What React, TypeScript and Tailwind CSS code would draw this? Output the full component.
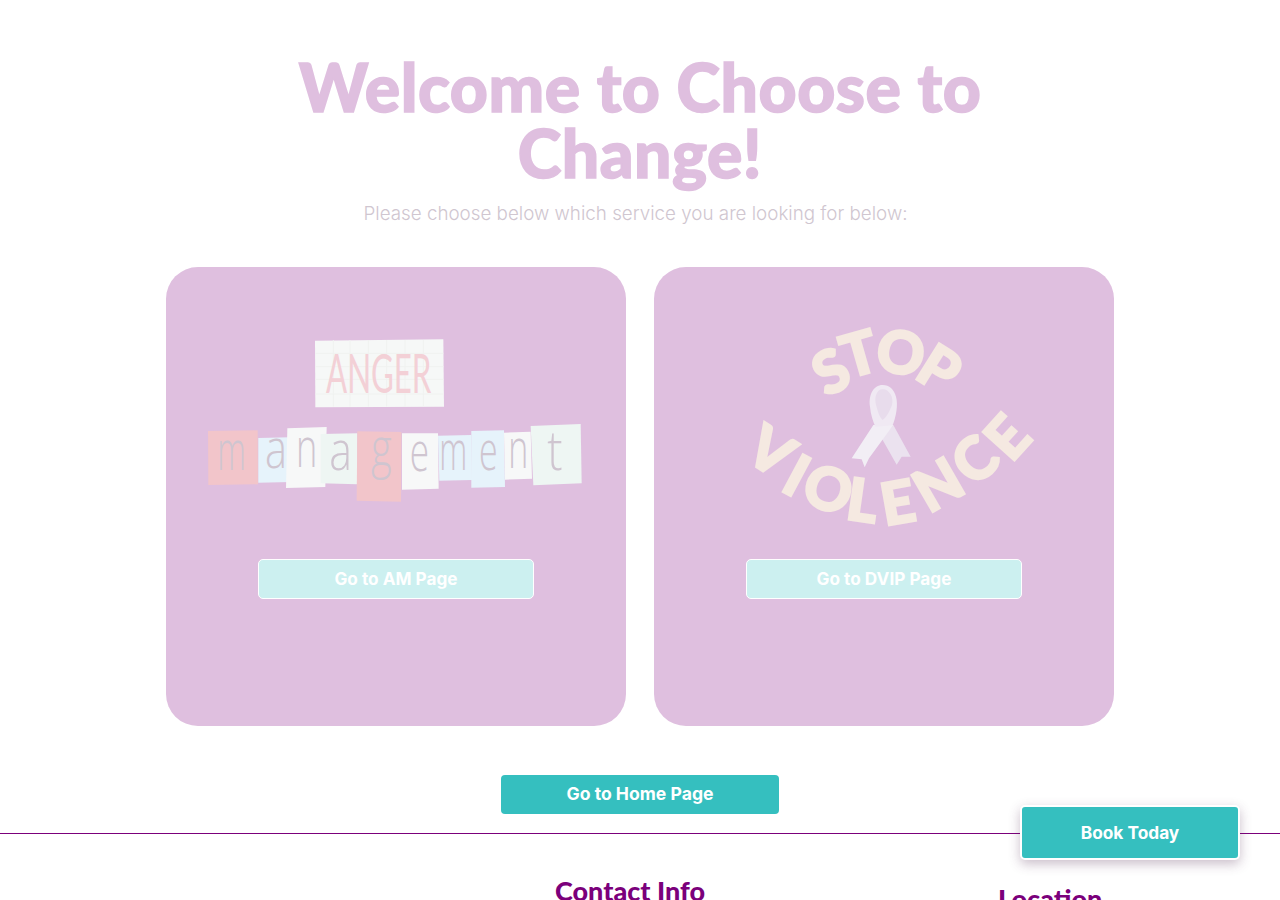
const tiles: [string, string, string, number, number, number][] = [
  ["54,333 203,331 204,493 55,495", "#f2c5ca", "m", 125, 450, 86],
  ["205,354 300,352 303,486 205,488", "#e6f3fb", "a", 258, 445, 66],
  ["292,325 410,321 406,501 288,504", "#f7f8f8", "n", 350, 440, 64],
  ["392,342 502,340 502,493 392,490", "#eef6f3", "a", 452, 450, 68],
  ["502,334 634,336 633,545 500,542", "#f2c5ca", "g", 574, 442, 62],
  ["636,340 744,340 746,506 636,509", "#f7f8f8", "e", 688, 452, 58],
  ["744,347 844,345 846,480 748,482", "#e6f3fb", "m", 790, 450, 84],
  ["844,333 942,331 945,501 844,503", "#e6f3fb", "e", 895, 450, 56],
  ["942,338 1022,335 1026,476 945,479", "#f7f8f8", "n", 985, 445, 60],
  ["1022,318 1172,312 1175,490 1030,496", "#eef6f3", "t", 1095, 450, 46],
];

const stopLetters: [string, number, number, number][] = [
  ["S", 303, 185, -28],
  ["T", 388, 132, -16],
  ["O", 512, 128, 10],
  ["P", 628, 178, 32],
  ["V", 122, 425, 32],
  ["I", 200, 497, 28],
  ["O", 295, 538, 18],
  ["L", 398, 572, 8],
  ["E", 503, 578, -10],
  ["N", 625, 525, -30],
  ["C", 735, 450, -42],
  ["E", 832, 382, -48],
];

function AngerLogo() {
  return (
    <svg viewBox="0 0 1230 600" className="w-[410px] h-[200px] block">
      <polygon points="375,62 760,58 762,260 376,262" fill="#f6f8f7" />
      <g stroke="#f0f2f0" strokeWidth="3">
        {[430, 480, 535, 590, 645, 700].map((x) => (
          <line key={x} x1={x} y1="60" x2={x} y2="260" />
        ))}
        {[100, 140, 178, 222].map((y) => (
          <line key={y} x1="376" y1={y} x2="760" y2={y} />
        ))}
      </g>
      <text x="408" y="218" textLength="316" lengthAdjust="spacingAndGlyphs" fontFamily="Lato, sans-serif" fontWeight="400" fontSize="164" fill="#f3d0d6">
        ANGER
      </text>
      {tiles.map(([pts, fill]) => (
        <polygon key={pts} points={pts} fill={fill} />
      ))}
      {tiles.map(([pts, , ch, x, y, w]) => (
        <text key={pts} x={x - w / 2} y={y} textLength={w} lengthAdjust="spacingAndGlyphs" fontFamily="'Open Sans', sans-serif" fontWeight="300" fontSize="165" fill="#cfc5d0">
          {ch}
        </text>
      ))}
    </svg>
  );
}

function StopLogo() {
  return (
    <svg viewBox="0 0 960 690" className="w-[320px] h-[230px] block">
      {stopLetters.map(([ch, x, y, r], i) => (
        <text
          key={i}
          x={x}
          y={y + 62}
          textAnchor="middle"
          transform={`rotate(${r} ${x} ${y})`}
          fontFamily="Lato, sans-serif"
          fontWeight="900"
          fontSize="176"
          fill="#f5e9e1"
          stroke="#f5e9e1"
          strokeWidth="7"
        >
          {ch}
        </text>
      ))}
      <path d="M455 385 L490 345 L542 440 L515 440 L500 464 Z" fill="#ebe2ef" />
      <path d="M430 345 L490 345 L417 445 L404 472 L395 448 L365 445 Z" fill="#f2eef5" />
      <path
        d="M458 225 C430 225 415 255 420 290 C422 315 430 335 436 350 L488 346 C498 320 505 285 498 260 C492 238 478 225 458 225 Z"
        fill="#f0e9f3"
      />
      <path d="M458 238 C440 238 432 262 438 285 C444 305 448 322 458 330 C470 322 478 305 486 285 C492 262 478 238 458 238 Z" fill="#e8dcec" />
    </svg>
  );
}

function Card({ label, children }: { label: string; children: React.ReactNode }) {
  return (
    <div className="w-[460px] h-[459px] shrink-0 rounded-[32px] bg-[#dfbfdf] flex flex-col items-center">
      <div className="h-[292px] w-full flex justify-center">{children}</div>
      <button className="w-[276px] h-[40px] shrink-0 rounded-[5px] border border-white bg-[#ccf0f0] text-white font-bold text-[17.2px] font-['Inter',sans-serif]">
        {label}
      </button>
    </div>
  );
}

export default function App() {
  return (
    <div className="relative h-[900px] overflow-hidden bg-white flex flex-col items-center pt-[54px] font-['Inter',sans-serif]">
      <h1 className="w-[760px] shrink-0 text-center text-[66px] leading-[66px] font-black text-[#dfbfdf] font-['Lato',sans-serif] tracking-[0.5px] [-webkit-text-stroke:1.5px_#dfbfdf]">
        Welcome to Choose to Change!
      </h1>
      <p className="mt-[13px] mr-[9px] h-[30px] shrink-0 leading-[30px] text-[18.8px] font-light text-[#d0c6d0]">
        Please choose below which service you are looking for below:
      </p>
      <div className="mt-[38px] flex gap-[28px] shrink-0">
        <Card label="Go to AM Page">
          <div className="mt-[53px] ml-[-2px]">
            <AngerLogo />
          </div>
        </Card>
        <Card label="Go to DVIP Page">
          <div className="mt-[43px] ml-[12px]">
            <StopLogo />
          </div>
        </Card>
      </div>
      <button className="mt-[49px] w-[278px] h-[39px] shrink-0 rounded-[4px] bg-[#35bfbf] text-white font-bold text-[17.6px]">
        Go to Home Page
      </button>
      <div className="mt-[19px] w-full h-px shrink-0 bg-[#7b007b]" />
      <div className="w-full flex shrink-0">
        <div className="ml-[555px] mt-[43px] leading-none text-[27px] font-black text-[#7b007b] font-['Lato',sans-serif] whitespace-nowrap">
          Contact Info
        </div>
        <div className="ml-[293px] mt-[51px] leading-none text-[27px] font-black text-[#7b007b] font-['Lato',sans-serif] whitespace-nowrap">
          Location
        </div>
      </div>
      <button className="absolute left-[1020px] top-[805px] w-[220px] h-[55px] rounded-[5px] border-2 border-white bg-[#35bfbf] text-white font-bold text-[17.3px] shadow-[0_4px_12px_rgba(80,40,80,0.3)]">
        Book Today
      </button>
    </div>
  );
}
